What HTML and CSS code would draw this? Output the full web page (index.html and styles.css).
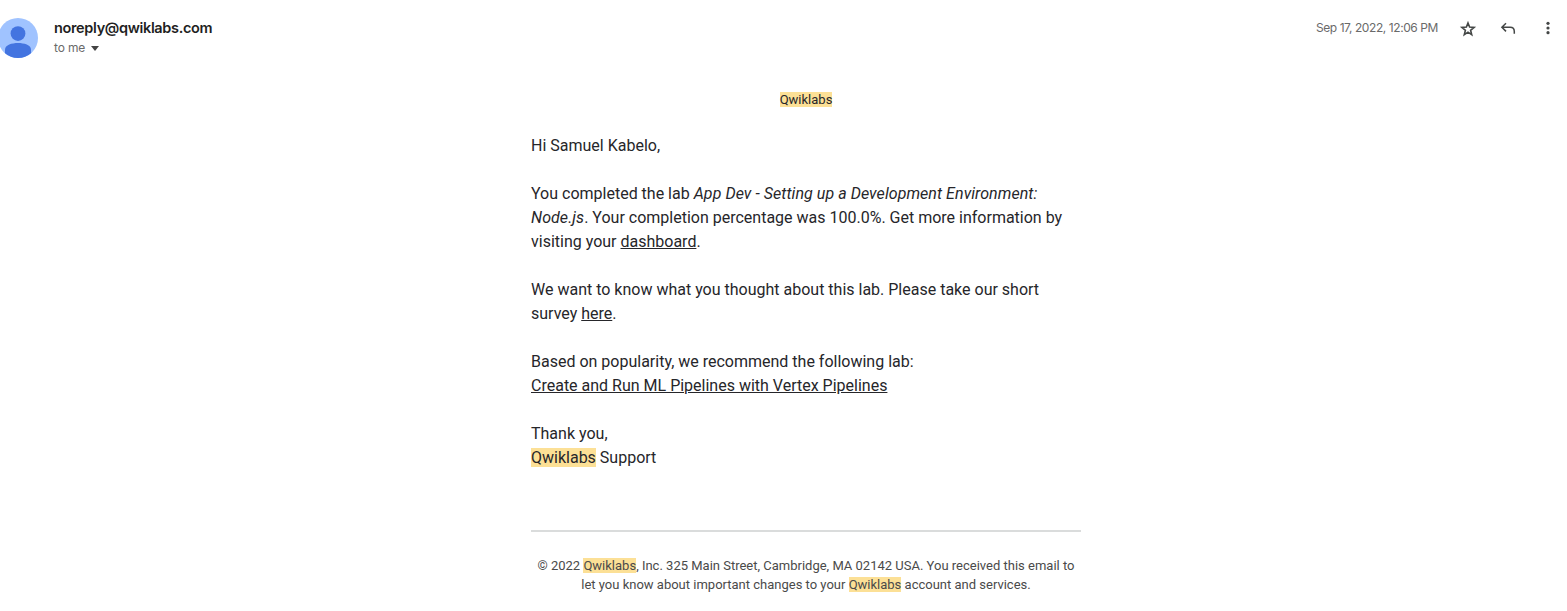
FILE: index.html
```html
<!DOCTYPE html>
<html lang="en">
<head>
<meta charset="utf-8">
<title>Qwiklabs message</title>
<link rel="stylesheet" href="styles.css">
</head>
<body>
<header class="message-header">
  <svg class="avatar" viewBox="0 0 40 40"><circle cx="20" cy="20" r="20" fill="#a0c3ff"/><circle cx="20" cy="15.600" r="7.400" fill="#4374e0"/><path d="M7 31.500C7 27 14 25 20 25s13 2 13 6.500V35.200A20 20 0 0 1 7 35.200z" fill="#4374e0"/></svg>
  <div class="sender">
    <div class="address">noreply@qwiklabs.com</div>
    <div class="recipient">to me <span class="caret"></span></div>
  </div>
  <div class="actions">
    <time class="date">Sep 17, 2022, 12:06 PM</time>
    <svg class="icon star" viewBox="0 0 20 20"><path d="M10 5l1.600 4.100 4.500.3-3.500 2.900 1.100 4.300L10 14.200l-3.700 2.400 1.100-4.300-3.500-2.900 4.500-.3z"/></svg>
    <svg class="icon reply" viewBox="0 0 20 20"><path d="M8 5.200L3.900 9.300 8 13.400M3.900 9.300h8.300c2.500 0 4.100 1.600 4.100 4.100v2.400"/></svg>
    <svg class="icon more" viewBox="0 0 20 20"><circle cx="10" cy="5.300" r="1.600"/><circle cx="10" cy="10" r="1.600"/><circle cx="10" cy="14.700" r="1.600"/></svg>
  </div>
</header>
<main class="message">
  <div class="brand"><mark>Qwiklabs</mark></div>
  <div class="copy">
    <p>Hi Samuel Kabelo,</p>
    <p>You completed the lab <em>App Dev - Setting up a Development Environment:<br>Node.js</em>. Your completion percentage was 100.0%. Get more information by<br>visiting your <a>dashboard</a>.</p>
    <p>We want to know what you thought about this lab. Please take our short<br>survey <a>here</a>.</p>
    <p>Based on popularity, we recommend the following lab:<br><a>Create and Run ML Pipelines with Vertex Pipelines</a></p>
    <p>Thank you,<br><mark>Qwiklabs</mark> Support</p>
  </div>
  <footer class="legal">© 2022 <mark>Qwiklabs</mark>, Inc. 325 Main Street, Cambridge, MA 02142 USA. You received this email to<br>let you know about important changes to your <mark>Qwiklabs</mark> account and services.</footer>
</main>
</body>
</html>
```
FILE: styles.css
```css
* { box-sizing: border-box; }
body { margin: 0; background: #fff; color: #26262a; font-family: Roboto, sans-serif; overflow: hidden; }
.message-header { display: flex; height: 76px; padding-top: 18px; }
.avatar { width: 40px; height: 40px; margin-left: -2px; flex: none; }
.sender { margin-left: 16px; }
.address { font: 600 14.500px/20px Inter, sans-serif; letter-spacing: -.34px; color: #1f1f1f; }
.recipient { display: flex; align-items: center; font: 12px/20px Inter, sans-serif; letter-spacing: -.15px; color: #6a6a6a; }
.caret { margin-left: 6px; border: 4px solid transparent; border-top: 5px solid #444; border-bottom: 0; }
.actions { margin-left: auto; display: flex; align-items: center; height: 20px; padding-right: 9px; }
.date { font: 12px/20px Inter, sans-serif; letter-spacing: -.42px; color: #6a6a6a; margin-right: 20px; white-space: nowrap; }
.icon { width: 20px; height: 20px; fill: #444746; margin-right: 20px; flex: none; }
.star, .reply { fill: none; stroke: #444746; stroke-width: 1.600; }
.reply { stroke-width: 1.500; }
.more { margin-right: 0; }
.message { width: 550px; margin-left: 531px; }
.brand { padding-top: 14px; text-align: center; font-size: 13px; line-height: 20px; }
.copy { padding-top: 24px; font-size: 16px; line-height: 24px; white-space: nowrap; }
.copy p { margin: 0 0 24px; }
.copy em { letter-spacing: .06px; }
.copy a { text-decoration: underline; }
mark { background: #fce096; color: inherit; }
.legal { margin-top: 60px; padding-top: 24px; border-top: 2px solid #dadcdc; text-align: center; font-size: 13px; line-height: 19px; color: #4a4a4a; white-space: nowrap; }
```
